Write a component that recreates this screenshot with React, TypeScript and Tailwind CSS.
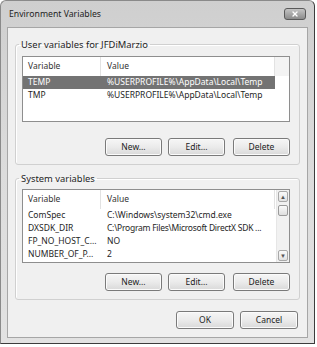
import { X } from "lucide-react";

const userVars = [
  { name: "TEMP", value: "%USERPROFILE%\\AppData\\Local\\Temp", selected: true },
  { name: "TMP", value: "%USERPROFILE%\\AppData\\Local\\Temp", selected: false },
];

const systemVars = [
  { name: "ComSpec", value: "C:\\Windows\\system32\\cmd.exe", tight: false },
  { name: "DXSDK_DIR", value: "C:\\Program Files\\Microsoft DirectX SDK ...", tight: true },
  { name: "FP_NO_HOST_C...", value: "NO", tight: false },
  { name: "NUMBER_OF_P...", value: "2", tight: false },
];

function WinButton({ label, className = "" }: { label: string; className?: string }) {
  return (
    <button
      className={
        "h-[18px] w-[57px] rounded-[3px] border border-[#7a7a7a] bg-gradient-to-b from-[#f6f6f6] via-[#ebebeb] to-[#d9d9d9] text-[8.5px] leading-none text-[#222] shadow-[inset_0_0_0_1px_#fbfbfb] " +
        className
      }
    >
      {label}
    </button>
  );
}

function Header({ last }: { last?: boolean }) {
  return (
    <div className="flex h-[19px] bg-white text-[8.5px] text-[#333]">
      <div className="flex w-[78px] items-center border-r border-[#e2e2e2] pl-[5px]">Variable</div>
      <div className="flex w-[174px] items-center border-r border-[#e2e2e2] pl-[6px]">Value</div>
      {last && <div className="flex-1 bg-[#f3f3f3]" />}
    </div>
  );
}

function ScrollBar() {
  return (
    <div className="flex w-[13px] flex-col border-l border-[#e6e6e6] bg-[#f1f1f1] px-[1px] py-[1px]">
      <div className="flex h-[11px] items-center justify-center rounded-[2px] border border-[#a8a8a8] bg-gradient-to-b from-[#fafafa] to-[#e2e2e2] text-[6px] leading-none text-[#555]">
        ▲
      </div>
      <div className="mt-[3px] h-[11px] rounded-[2px] border border-[#9a9a9a] bg-gradient-to-b from-[#fbfbfb] to-[#dedede]" />
      <div className="flex-1" />
      <div className="flex h-[11px] items-center justify-center rounded-[2px] border border-[#a8a8a8] bg-gradient-to-b from-[#fafafa] to-[#e2e2e2] text-[6px] leading-none text-[#555]">
        ▼
      </div>
    </div>
  );
}

export default function App() {
  return (
    <div
      className="h-[347px] w-[317px] bg-white"
      style={{ fontFamily: '"Noto Sans", "Open Sans", sans-serif' }}
    >
      <div className="flex w-[315px] flex-col rounded-t-[6px] border border-[#8a8a8a] border-b-[#3c3c3c] border-r-[#3c3c3c] bg-gradient-to-b from-[#cfcfcf] via-[#dcdcdc] to-[#e2e2e2]">
        {/* title bar */}
        <div className="flex h-[26px] items-center justify-between pl-[8px] pr-[8px] pt-[2px]">
          <span className="text-[8.7px] text-[#1e1e1e]">Environment Variables</span>
          <div className="mb-[2px] flex h-[12px] w-[22px] items-center justify-center rounded-[3px] border border-[#5a5a5a] bg-gradient-to-b from-[#c4c4c4] to-[#8c8c8c]">
            <X className="h-[8px] w-[8px] text-white" strokeWidth={4} />
          </div>
        </div>

        {/* client area */}
        <div className="mx-[6px] mb-[5px] border border-[#a6a6a6] bg-[#f0f0f0] px-[7px] pb-[8px] pt-[10px] text-[#1e1e1e]">
          <fieldset className="rounded-[3px] border border-[#d0d0d0] pb-[8px] pl-[6px] pr-[9px] pt-[5px] shadow-[inset_1px_1px_0_#fff]">
            <legend className="-ml-[3px] px-[2px] text-[9.4px] leading-[13px]">User variables for JFDiMarzio</legend>
            <div className="h-[66px] border border-[#8e8e8e] bg-white">
              <Header last />
              {userVars.map((v) => (
                <div
                  key={v.name}
                  className={
                    "flex h-[13px] w-[252px] items-center text-[8.5px] " +
                    (v.selected ? "bg-[#737373] text-white" : "text-[#1e1e1e]")
                  }
                >
                  <div className="w-[78px] pl-[5px]">{v.name}</div>
                  <div className="w-[174px] pl-[6px]">{v.value}</div>
                </div>
              ))}
            </div>
            <div className="mt-[16px] flex justify-end gap-[6px]">
              <WinButton label="New..." />
              <WinButton label="Edit..." />
              <WinButton label="Delete" className="ml-[2px]" />
            </div>
          </fieldset>

          <fieldset className="mt-[7px] rounded-[3px] border border-[#d0d0d0] pb-[8px] pl-[6px] pr-[9px] pt-[4px] shadow-[inset_1px_1px_0_#fff]">
            <legend className="-ml-[3px] px-[2px] text-[9.4px] leading-[13px]">System variables</legend>
            <div className="flex h-[74px] border border-[#8e8e8e] bg-white">
              <div className="flex-1">
                <Header />
                {systemVars.map((v) => (
                  <div key={v.name} className="flex h-[13px] items-center text-[8.5px] text-[#1e1e1e]">
                    <div className="w-[78px] whitespace-nowrap pl-[5px]">{v.name}</div>
                    <div
                      className={
                        "w-[174px] whitespace-nowrap pl-[6px] " + (v.tight ? "tracking-[-0.25px]" : "")
                      }
                    >
                      {v.value}
                    </div>
                  </div>
                ))}
              </div>
              <ScrollBar />
            </div>
            <div className="mt-[10px] flex justify-end gap-[6px]">
              <WinButton label="New..." />
              <WinButton label="Edit..." />
              <WinButton label="Delete" className="ml-[2px]" />
            </div>
          </fieldset>

          <div className="mt-[11px] flex justify-end gap-[6px] pr-[2px]">
            <WinButton label="OK" className="w-[58px]" />
            <WinButton label="Cancel" className="w-[58px]" />
          </div>
        </div>
      </div>
    </div>
  );
}
